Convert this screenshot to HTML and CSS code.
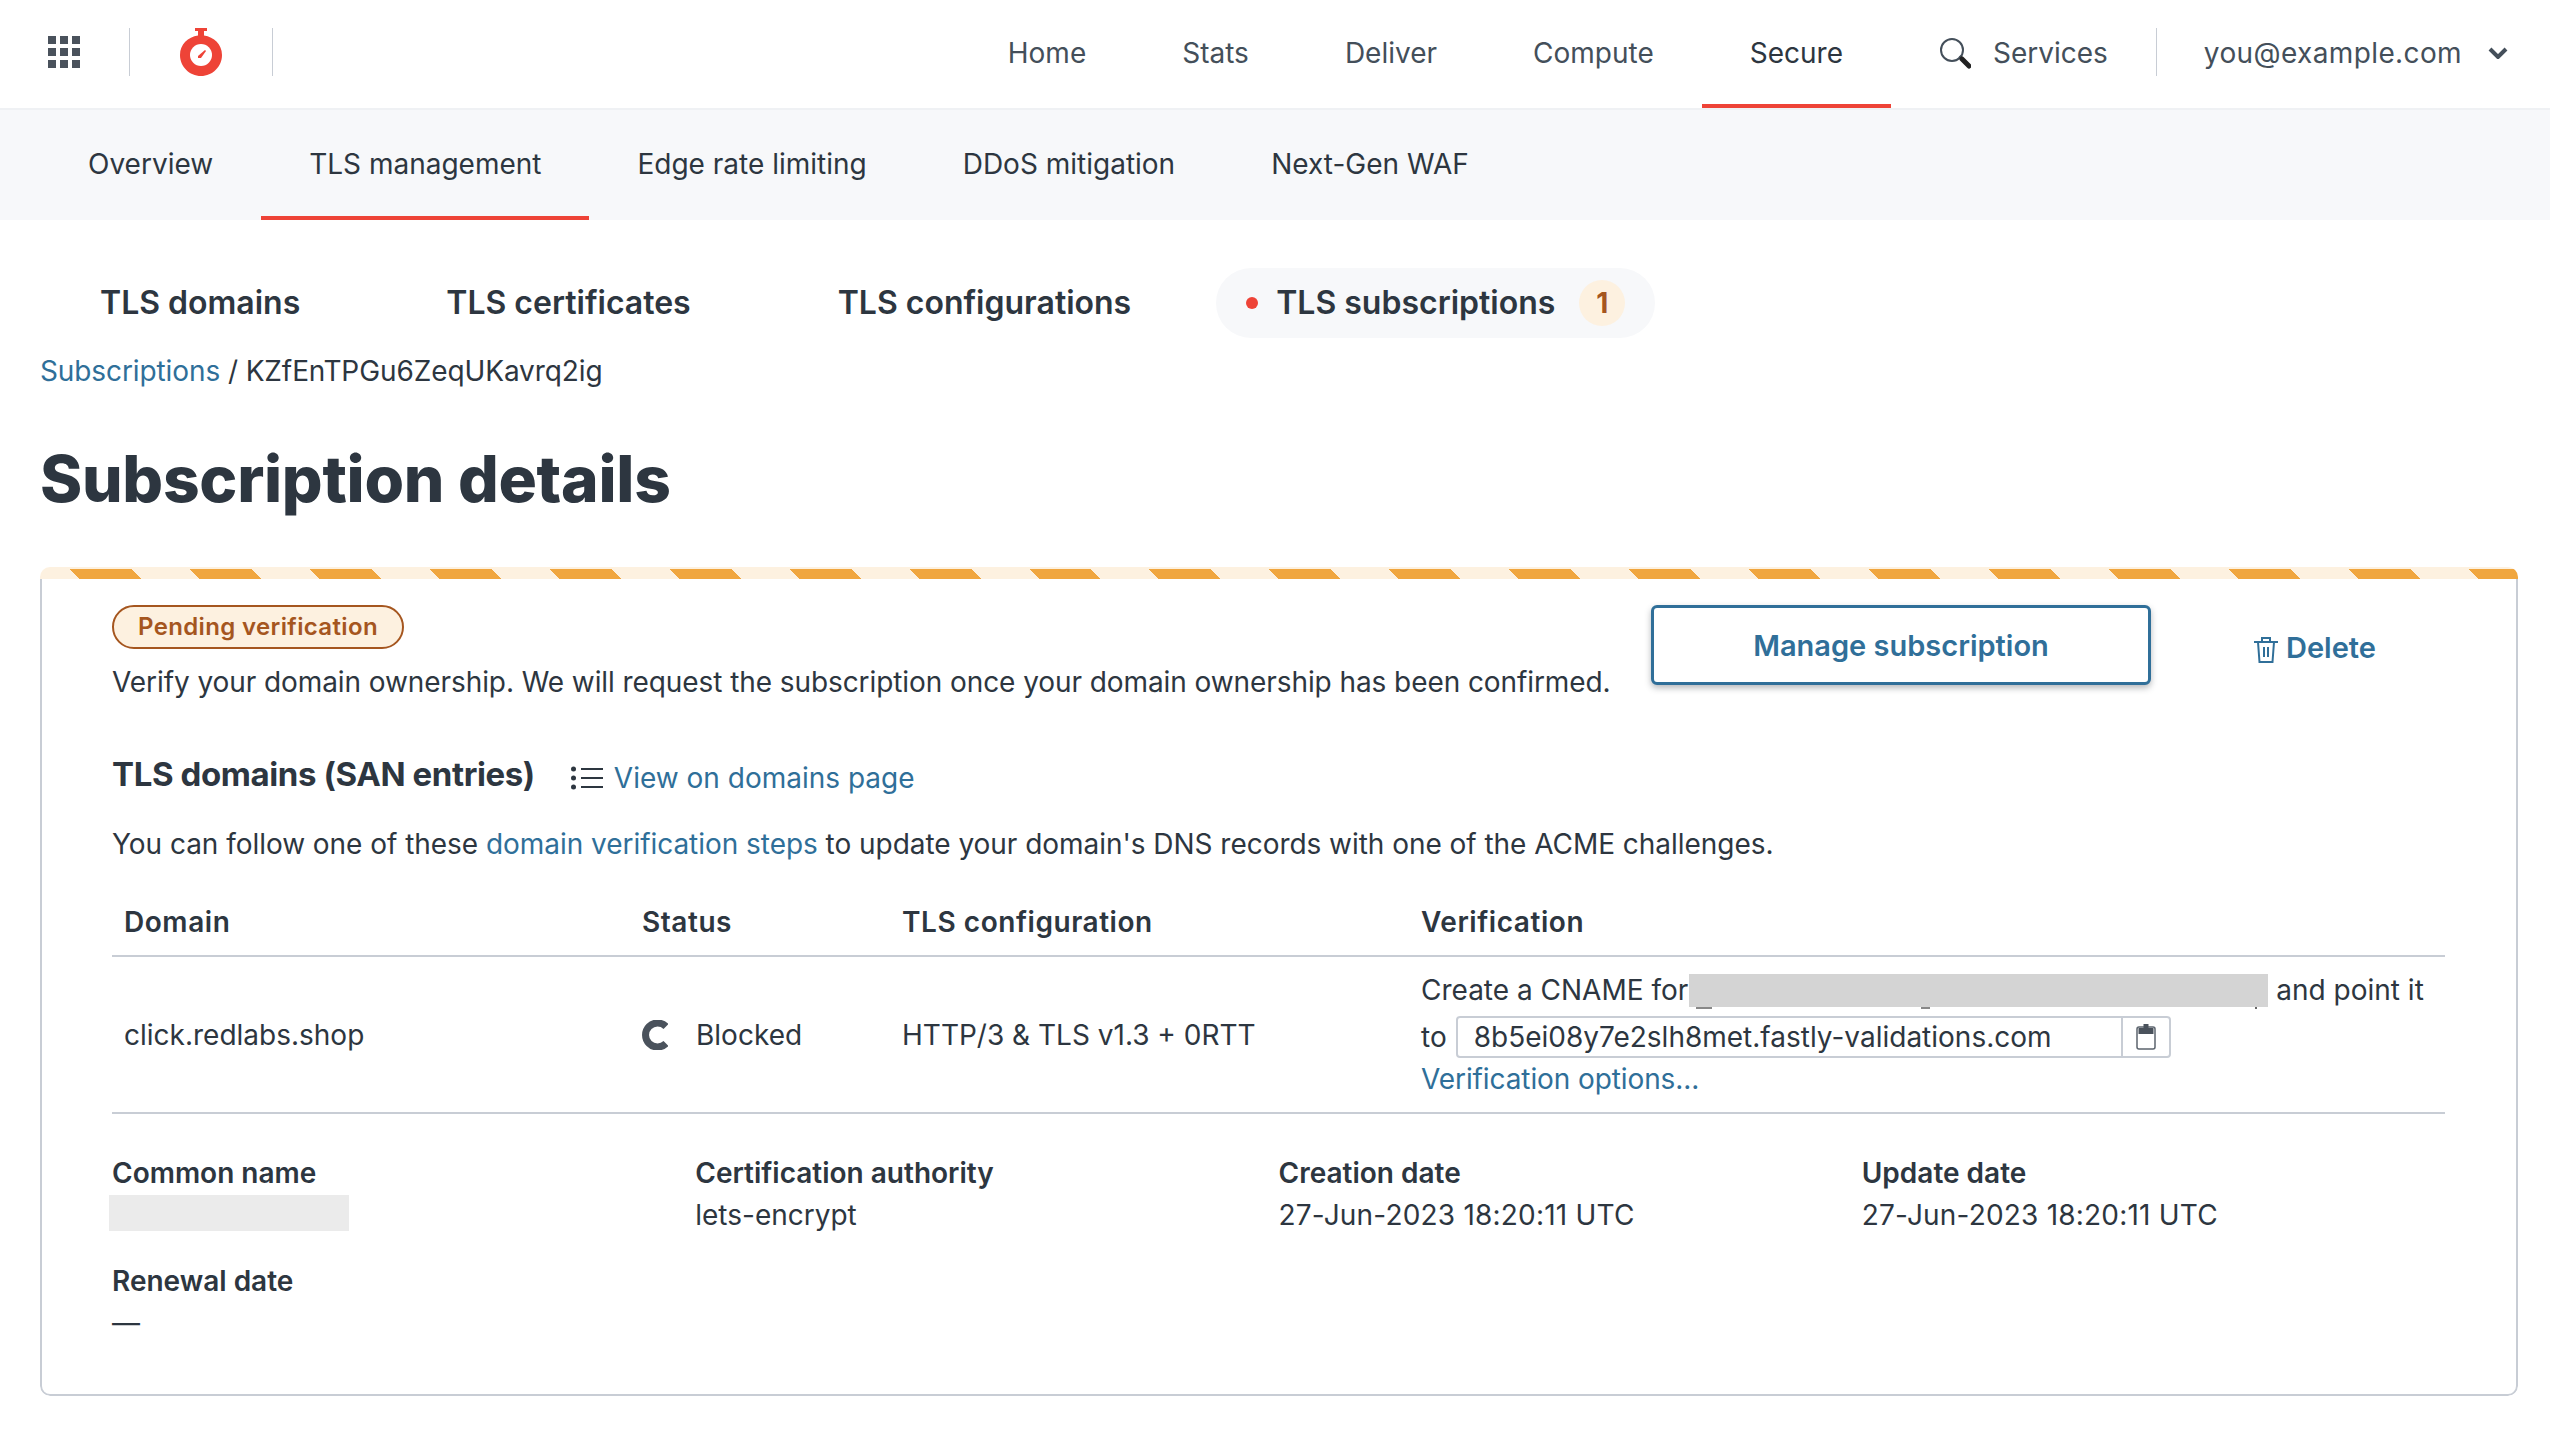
FILE: index.html
```html
<!DOCTYPE html>
<html lang="en">
<head>
    <meta charset="UTF-8">
    <title>Subscription details</title>
    <link rel="stylesheet" href="styles.css">
</head>
<body>
    <header class="topbar">
        <div class="brand">
            <svg class="grid-icon" width="32" height="32" viewBox="0 0 32 32" fill="#4a525c">
                <rect x="0" y="0" width="8" height="8"/><rect x="12" y="0" width="8" height="8"/><rect x="24" y="0" width="8" height="8"/>
                <rect x="0" y="12" width="8" height="8"/><rect x="12" y="12" width="8" height="8"/><rect x="24" y="12" width="8" height="8"/>
                <rect x="0" y="24" width="8" height="8"/><rect x="12" y="24" width="8" height="8"/><rect x="24" y="24" width="8" height="8"/>
            </svg>
            <span class="divider divider-first"></span>
            <svg class="logo" width="44" height="48" viewBox="0 0 44 48">
                <path fill="#ee4337" d="M16 0h12v3h-3v4.6C35 9 43 16.5 43 27c0 11.6-9.4 21-21 21S1 38.6 1 27C1 16.5 9 9 19 7.6V3h-3z"/>
                <circle cx="22" cy="27" r="11" fill="#fff"/>
                <path fill="#ee4337" d="M19 28l7-6 1 1-5 7h-3z"/>
            </svg>
            <span class="divider divider-second"></span>
        </div>
        <nav class="main-nav">
            <a class="main-link">Home</a>
            <a class="main-link">Stats</a>
            <a class="main-link">Deliver</a>
            <a class="main-link">Compute</a>
            <a class="main-link active">Secure</a>
            <a class="main-link services">
                <svg width="32" height="32" viewBox="0 0 32 32" fill="none">
                    <circle cx="13" cy="13" r="11" stroke="#444f5a" stroke-width="2"/>
                    <path d="M20 21l2-2" stroke="#444f5a" stroke-width="2"/>
                    <path d="M23 22l7 7" stroke="#222" stroke-width="5" stroke-linecap="round"/>
                </svg>
                Services
            </a>
            <span class="divider"></span>
            <a class="account">
                you@example.com
                <svg width="20" height="12" viewBox="0 0 20 12" fill="none">
                    <path d="M2 2l8 8 8-8" stroke="#444f5a" stroke-width="4"/>
                </svg>
            </a>
        </nav>
    </header>

    <nav class="sub-nav">
        <a class="sub-link">Overview</a>
        <a class="sub-link active">TLS management</a>
        <a class="sub-link">Edge rate limiting</a>
        <a class="sub-link">DDoS mitigation</a>
        <a class="sub-link">Next-Gen WAF</a>
    </nav>

    <main class="page">
        <div class="pill-tabs">
            <a class="pill-tab tab-domains">TLS domains</a>
            <a class="pill-tab tab-certs">TLS certificates</a>
            <a class="pill-tab tab-configs">TLS configurations</a>
            <a class="pill-tab current">
                <span class="red-dot"></span>
                TLS subscriptions
                <span class="count">1</span>
            </a>
        </div>

        <p class="breadcrumb"><a class="link">Subscriptions</a> / KZfEnTPGu6ZeqUKavrq2ig</p>

        <h1>Subscription details</h1>

        <section class="card">
            <div class="stripe"></div>
            <div class="card-body">
                <div class="card-head">
                    <div class="head-text">
                        <span class="status-pill">Pending verification</span>
                        <p class="verify-text">Verify your domain ownership. We will request the subscription once your domain ownership has been confirmed.</p>
                    </div>
                    <button class="manage-btn">Manage subscription</button>
                    <a class="delete-link">
                        <svg width="24" height="26" viewBox="0 0 24 26" fill="none" stroke="#306f99" stroke-width="2">
                            <path d="M0 5h24M8 5V1h8v4M4 5l1.5 20h13L20 5M10 10v10M14 10v10"/>
                        </svg>
                        Delete
                    </a>
                </div>

                <div class="domains-head">
                    <h3>TLS domains (SAN entries)</h3>
                    <svg width="32" height="24" viewBox="0 0 32 24" fill="none">
                        <path d="M10 3h22M10 12h22M10 21h22" stroke="#2d3640" stroke-width="2"/>
                        <circle cx="2.5" cy="3" r="2.5" fill="#2d3640"/><circle cx="2.5" cy="12" r="2.5" fill="#2d3640"/><circle cx="2.5" cy="21" r="2.5" fill="#2d3640"/>
                    </svg>
                    <a class="link">View on domains page</a>
                </div>

                <p class="follow-text">You can follow one of these <a class="link">domain verification steps</a> to update your domain's DNS records with one of the ACME challenges.</p>

                <table class="domains-table">
                    <colgroup>
                        <col class="col-domain"><col class="col-status"><col class="col-config"><col>
                    </colgroup>
                    <thead>
                        <tr><th>Domain</th><th>Status</th><th>TLS configuration</th><th>Verification</th></tr>
                    </thead>
                    <tbody>
                        <tr>
                            <td>click.redlabs.shop</td>
                            <td>
                                <span class="status-cell">
                                    <svg width="26" height="30" viewBox="0 0 26 30" fill="none">
                                        <path d="M24 6.5A12 12 0 1 0 24 23.5" stroke="#4a525c" stroke-width="7"/>
                                    </svg>
                                    Blocked
                                </span>
                            </td>
                            <td>HTTP/3 &amp; TLS v1.3 + 0RTT</td>
                            <td class="verify-cell">
                                <div class="cname-line">Create a CNAME for<span class="redact-cname"></span>and point it</div>
                                <div class="to-line">
                                    to
                                    <span class="copy-field">
                                        <span class="copy-value">8b5ei08y7e2slh8met.fastly-validations.com</span>
                                        <span class="copy-btn">
                                            <svg width="20" height="26" viewBox="0 0 20 26" fill="none">
                                                <rect x="1" y="3" width="18" height="22" rx="2" stroke="#5c646e" stroke-width="1.5"/>
                                                <path d="M7.5 0h5v4h5v6h-15V4h5z" fill="#4a525c"/>
                                            </svg>
                                        </span>
                                    </span>
                                </div>
                                <a class="link">Verification options...</a>
                            </td>
                        </tr>
                    </tbody>
                </table>

                <dl class="details">
                    <div>
                        <dt>Common name</dt>
                        <dd><span class="redact-name"></span></dd>
                    </div>
                    <div>
                        <dt>Certification authority</dt>
                        <dd>lets-encrypt</dd>
                    </div>
                    <div>
                        <dt>Creation date</dt>
                        <dd class="date">27-Jun-2023 18:20:11 UTC</dd>
                    </div>
                    <div>
                        <dt>Update date</dt>
                        <dd class="date">27-Jun-2023 18:20:11 UTC</dd>
                    </div>
                    <div>
                        <dt>Renewal date</dt>
                        <dd>—</dd>
                    </div>
                </dl>
            </div>
        </section>
    </main>
</body>
</html>
```

FILE: styles.css
```css
* {
    box-sizing: border-box;
}

html, body {
    margin: 0;
    background-color: #fff;
}

body {
    font-family: 'Inter', sans-serif;
    font-size: 28px;
    line-height: 40px;
    color: #2d3640;
    height: 1432px;
    overflow: hidden;
}

p, h1, h3, dl, dd {
    margin: 0;
}

.link {
    color: #2f6f99;
}

/* top bar */
.topbar {
    display: flex;
    justify-content: space-between;
    height: 110px;
    border-bottom: 2px solid #eff1f4;
}

.brand {
    display: flex;
    align-items: center;
    padding-left: 48px;
    height: 104px;
}

.divider {
    display: block;
    width: 1px;
    height: 48px;
    background-color: #c8cdd5;
}

.divider-first {
    margin: 0 49px 0 49px;
}

.divider-second {
    margin-left: 49px;
}

.logo {
    flex: none;
}

.main-nav {
    display: flex;
    align-items: center;
    height: 108px;
    color: #444f5a;
}

.main-nav .divider {
    margin-bottom: 4px;
}

.main-link {
    display: flex;
    align-items: center;
    height: 108px;
    padding: 0 48px 3px;
}

.main-link.active {
    color: #2d3640;
    border-bottom: 4px solid #ee4337;
    padding: 1px 48px 0;
}

.services {
    gap: 22px;
    padding-right: 48px;
}

.account {
    display: flex;
    align-items: center;
    gap: 26px;
    padding: 0 42px 3px 47px;
    letter-spacing: 0.38px;
}

/* second level nav */
.sub-nav {
    display: flex;
    height: 110px;
    padding-left: 40px;
    background-color: #f7f8fa;
}

.sub-link {
    display: flex;
    align-items: center;
    height: 110px;
    padding: 0 48px 2px;
}

.sub-link.active {
    border-bottom: 4px solid #ee4337;
    padding: 2px 48px 0;
}

/* page */
.page {
    padding: 48px 32px 0 40px;
}

.pill-tabs {
    display: flex;
    align-items: center;
    height: 70px;
    font-size: 32px;
    font-weight: 600;
}

.pill-tab {
    display: flex;
    align-items: center;
    height: 70px;
    border-radius: 35px;
}

.tab-domains {
    margin-left: 60px;
}

.tab-certs {
    margin-left: 146px;
}

.tab-configs {
    margin-left: 147px;
}

.pill-tab.current {
    margin-left: 85px;
    padding: 0 30px;
    background-color: #f7f8fa;
}

.red-dot {
    width: 12px;
    height: 12px;
    margin-right: 18px;
    border-radius: 50%;
    background-color: #ee4337;
}

.count {
    display: flex;
    align-items: center;
    justify-content: center;
    width: 46px;
    height: 46px;
    margin-left: 24px;
    border-radius: 50%;
    font-size: 28px;
    font-weight: 700;
    color: #a5561f;
    background-color: #fdf1e0;
}

.breadcrumb {
    margin-top: 13px;
    letter-spacing: -0.1px;
}

h1 {
    margin-top: 48px;
    font-size: 64px;
    line-height: 80px;
    font-weight: 800;
    letter-spacing: -0.27px;
}

/* card */
.card {
    margin-top: 48px;
    border-radius: 10px;
    overflow: hidden;
}

.stripe {
    height: 12px;
    border-top: 2px solid #fdf1e0;
    background-image: repeating-linear-gradient(45deg, #fdf1e0 0, #fdf1e0 27.6px, #f0a63f 27.6px, #f0a63f 71.44px, #fdf1e0 71.44px, #fdf1e0 84.85px);
}

.card-body {
    height: 817px;
    padding: 26px 71px 0 70px;
    border: 2px solid #c8cdd5;
    border-top: 0;
    border-radius: 0 0 10px 10px;
}

.card-head {
    display: flex;
    align-items: flex-start;
}

.head-text {
    width: 1539px;
}

.status-pill {
    display: block;
    width: 292px;
    height: 44px;
    border: 2px solid #a5561f;
    border-radius: 22px;
    font-size: 24px;
    line-height: 40px;
    font-weight: 600;
    letter-spacing: 0.35px;
    text-align: center;
    color: #a5561f;
    background-color: #fdf1e0;
}

.verify-text {
    margin-top: 13px;
    letter-spacing: -0.08px;
}

.manage-btn {
    width: 500px;
    height: 80px;
    border: 3px solid #306f99;
    border-radius: 6px;
    font-family: inherit;
    font-size: 29px;
    font-weight: 600;
    color: #306f99;
    background-color: #fff;
    box-shadow: 0 3px 6px rgba(48, 54, 64, 0.35);
}

.delete-link {
    display: flex;
    align-items: center;
    gap: 8px;
    margin: 23px 0 0 103px;
    font-size: 29px;
    font-weight: 600;
    color: #306f99;
}

.delete-link svg {
    margin-top: 4px;
}

.domains-head {
    display: flex;
    align-items: center;
    height: 42px;
    margin-top: 51px;
}

.domains-head h3 {
    font-size: 33px;
    font-weight: 700;
    letter-spacing: -0.4px;
}

.domains-head svg {
    margin: 7px 11px 0 36px;
}

.domains-head .link {
    margin-top: 8px;
}

.follow-text {
    margin-top: 29px;
    letter-spacing: -0.04px;
}

.domains-table {
    width: 100%;
    margin-top: 38px;
    border-collapse: collapse;
    table-layout: fixed;
}

.col-domain {
    width: 518px;
}

.col-status {
    width: 260px;
}

.col-config {
    width: 519px;
}

.domains-table th {
    height: 54px;
    padding: 0 12px;
    border-bottom: 2px solid #c8cdd5;
    font-weight: 600;
    letter-spacing: 0.55px;
    text-align: left;
    vertical-align: top;
}

.domains-table td {
    height: 157px;
    padding: 0 12px;
    border-bottom: 2px solid #c8cdd5;
}

.status-cell {
    display: flex;
    align-items: center;
    gap: 28px;
}

.cname-line {
    height: 46px;
    line-height: 40px;
    white-space: nowrap;
}

/* redaction box, with the bits of text that stick out under it */
.redact-cname {
    display: inline-block;
    width: 579px;
    height: 35px;
    margin: 0 8px 0 1px;
    vertical-align: -9px;
    background:
        linear-gradient(#d4d4d4, #d4d4d4) 0 0 / 100% 33px no-repeat,
        linear-gradient(#888, #888) 7px 33px / 16px 2px no-repeat,
        linear-gradient(#888, #888) 232px 33px / 9px 2px no-repeat,
        linear-gradient(#666, #666) 566px 33px / 2px 2px no-repeat;
}

.to-line {
    display: flex;
    align-items: center;
    gap: 9px;
    height: 42px;
}

.copy-field {
    display: flex;
    width: 715px;
    height: 42px;
    border: 2px solid #c8cdd5;
    border-radius: 4px;
}

.copy-value {
    flex: 1;
    padding-left: 16px;
    line-height: 38px;
    border-right: 2px solid #c8cdd5;
}

.copy-btn {
    display: flex;
    align-items: center;
    justify-content: center;
    width: 46px;
}

.verify-cell .link {
    display: block;
    height: 40px;
    margin-top: 1px;
    letter-spacing: -0.1px;
}

.details {
    display: grid;
    grid-template-columns: repeat(4, 1fr);
    row-gap: 26px;
    margin-top: 39px;
}

.details dt {
    font-weight: 600;
}

.details dd {
    height: 40px;
    margin-top: 2px;
}

.details .date {
    letter-spacing: 0.2px;
}

.redact-name {
    display: block;
    width: 240px;
    height: 36px;
    margin-left: -3px;
    background-color: #ebebeb;
}
```
